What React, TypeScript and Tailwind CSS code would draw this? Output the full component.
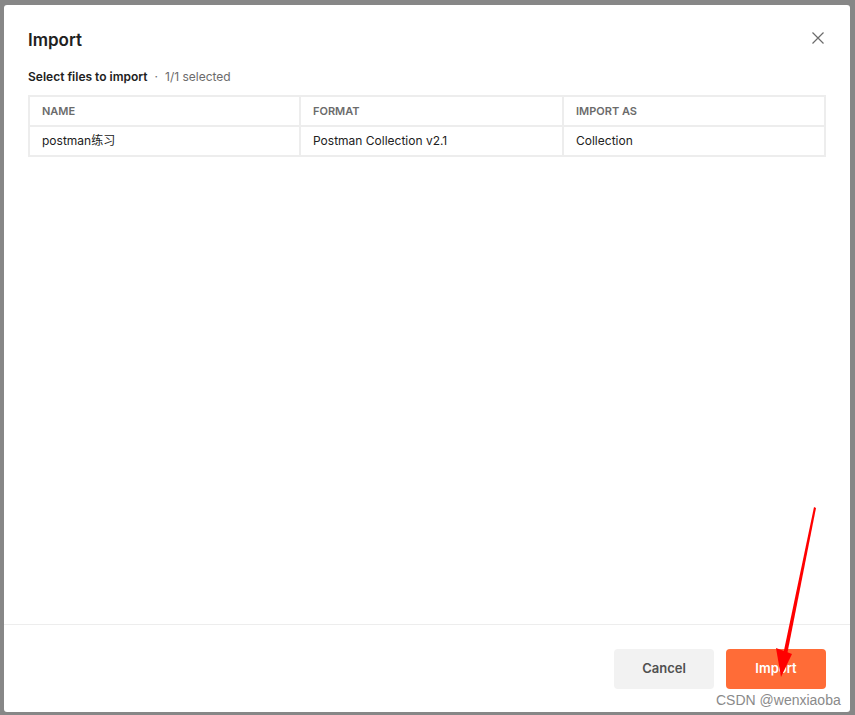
import React from "react";

export default function App() {
  return (
    <div className="relative w-[855px] h-[715px] bg-[#878787] pt-[5px] pl-[4px] pr-[5px] pb-[3px] font-['Inter','Noto_Sans_CJK_SC',sans-serif]">
      <div className="flex h-full w-full flex-col rounded-[3px] bg-white">
        <div className="flex-1 px-6 pt-[25px]">
          <div className="flex items-center justify-between">
            <h1 className="text-[17px] leading-[20px] font-semibold text-[#212121]">Import</h1>
            <svg width="14" height="14" viewBox="0 0 14 14" className="mr-[1px] -mt-[5px]">
              <path d="M1.5 1.5 L12.5 12.5 M12.5 1.5 L1.5 12.5" stroke="#6b6b6b" strokeWidth="1.2" fill="none" />
            </svg>
          </div>
          <div className="mt-[19px] flex items-center text-[12px] leading-[16px]">
            <span className="font-semibold text-[#212121]">Select files to import</span>
            <span className="mx-[7px] text-[#6b6b6b]">·</span>
            <span className="text-[#6b6b6b]">1/1 selected</span>
          </div>
          <div className="mt-[10px] grid grid-cols-[269px_261px_1fr] gap-[2px] bg-[#ededed] p-[2px]">
            <div className="flex h-[28px] items-center bg-white px-3 text-[11px] font-semibold text-[#6b6b6b]">NAME</div>
            <div className="flex h-[28px] items-center bg-white px-3 text-[11px] font-semibold text-[#6b6b6b]">FORMAT</div>
            <div className="flex h-[28px] items-center bg-white px-3 text-[11px] font-semibold text-[#6b6b6b]">IMPORT AS</div>
            <div className="flex h-[28px] items-center bg-white px-3 text-[12px] text-[#212121]">postman练习</div>
            <div className="flex h-[28px] items-center bg-white px-3 text-[12px] text-[#212121]">Postman Collection v2.1</div>
            <div className="flex h-[28px] items-center bg-white px-3 text-[12px] text-[#212121]">Collection</div>
          </div>
        </div>
        <div className="flex justify-end gap-3 border-t border-[#ededed] pt-[24px] pb-[23px] pr-[24px]">
          <button className="h-10 w-[100px] rounded-[4px] bg-[#f2f2f2] text-[13px] font-semibold text-[#505050]">Cancel</button>
          <button className="h-10 w-[100px] rounded-[4px] bg-[#ff6c37] text-[13px] font-semibold text-white">Import</button>
        </div>
      </div>
      <svg className="pointer-events-none absolute left-0 top-0" width="855" height="715">
        <polygon points="814,507 816,508 786,660 782,660" fill="#ff0000" />
        <polygon points="776,648 792,654 781,677" fill="#ff0000" />
      </svg>
      <div className="pointer-events-none absolute left-[716px] top-[691px] font-['Liberation_Sans',sans-serif] text-[14px] leading-[18px] text-[#8a8a8a] [text-shadow:0_0_2px_#fff]">
        CSDN @wenxiaoba
      </div>
    </div>
  );
}
